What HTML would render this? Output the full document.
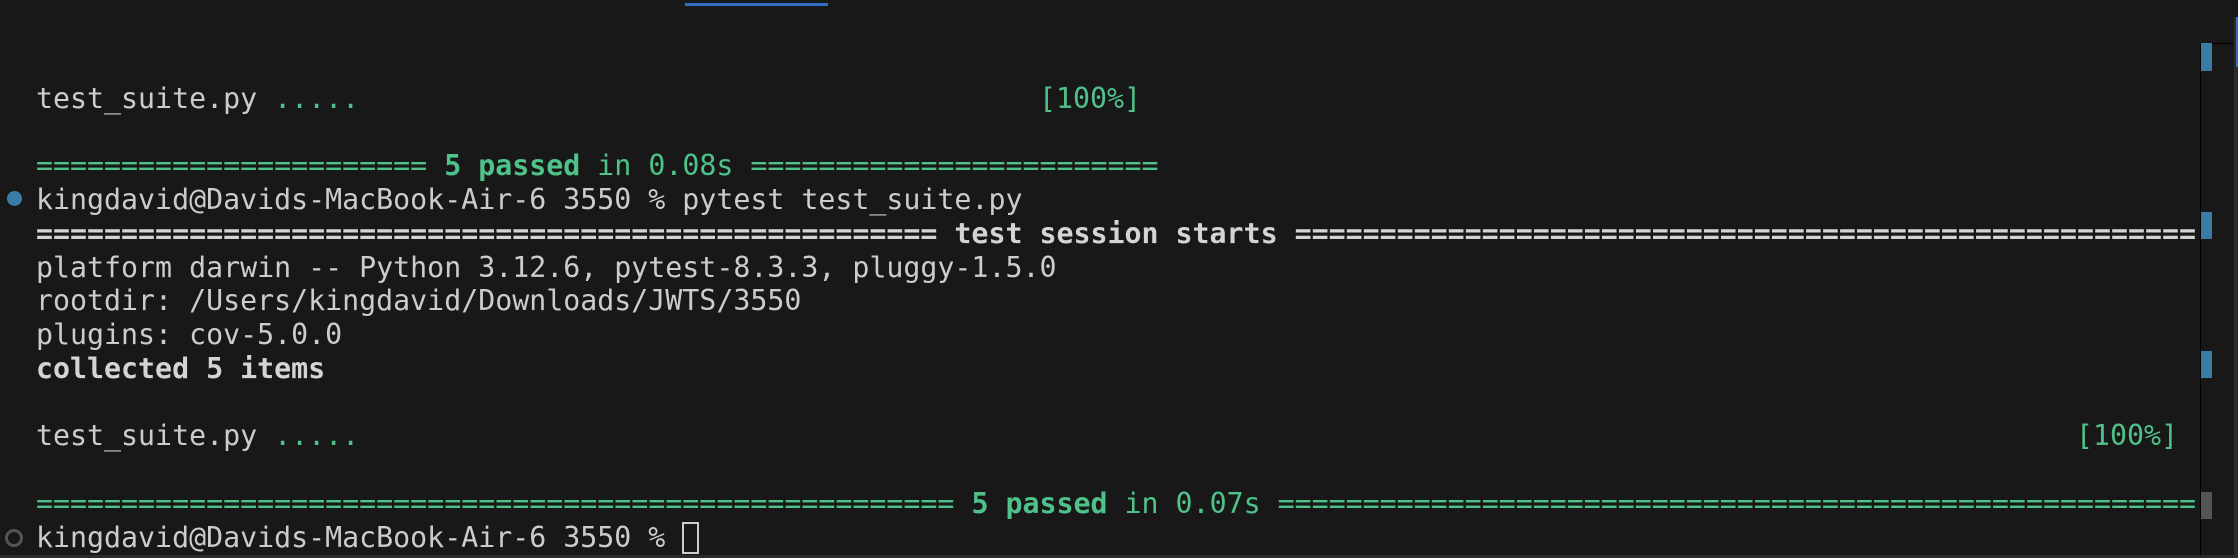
<!DOCTYPE html>
<html><head><meta charset="utf-8"><style>
html,body{margin:0;padding:0;background:#181818;width:2238px;height:558px;overflow:hidden;position:relative}
.r{position:absolute;left:36px;height:34px;line-height:34px;white-space:pre;font-family:"DejaVu Sans Mono","Liberation Mono",monospace;font-size:28.25px;color:#cccccc}
.g{color:#4fc28a}.b{font-weight:bold}.w{color:#d4d4d4}
</style></head><body>
<div style="position:absolute;left:685px;top:3px;width:143px;height:3px;background:#2f6ec4"></div>
<div class="r" style="top:82px">test_suite.py <span class="g">.....</span></div>
<div class="r g" style="top:82px;left:1039px">[100%]</div>
<div class="r g" style="top:149px">======================= <span class="b">5 passed</span> in 0.08s ========================</div>
<div style="position:absolute;left:7px;top:191px;width:15px;height:15px;border-radius:50%;background:#3a7ca8"></div>
<div class="r" style="top:183px">kingdavid@Davids-MacBook-Air-6 3550 % pytest test_suite.py</div>
<div class="r b w" style="top:217px">===================================================== test session starts =====================================================</div>
<div class="r" style="top:251px">platform darwin -- Python 3.12.6, pytest-8.3.3, pluggy-1.5.0</div>
<div class="r" style="top:284px">rootdir: /Users/kingdavid/Downloads/JWTS/3550</div>
<div class="r" style="top:318px">plugins: cov-5.0.0</div>
<div class="r b w" style="top:352px">collected 5 items</div>
<div class="r" style="top:419px">test_suite.py <span class="g">.....</span></div>
<div class="r g" style="top:419px;left:2076px">[100%]</div>
<div class="r g" style="top:487px">====================================================== <span class="b">5 passed</span> in 0.07s ======================================================</div>
<div style="position:absolute;left:5px;top:529px;width:12px;height:12px;border-radius:50%;border:3px solid #555"></div>
<div class="r" style="top:521px">kingdavid@Davids-MacBook-Air-6 3550 % </div>
<div style="position:absolute;left:682px;top:522px;width:13px;height:28px;border:2px solid #cccccc"></div>
<div style="position:absolute;left:2200px;top:43px;width:1px;height:515px;background:#000"></div>
<div style="position:absolute;left:2200px;top:43px;width:34px;height:1px;background:#000"></div>
<div style="position:absolute;left:2201px;top:43px;width:11px;height:28px;background:#3a7ca5"></div>
<div style="position:absolute;left:2201px;top:212px;width:11px;height:27px;background:#3a7ca5"></div>
<div style="position:absolute;left:2201px;top:351px;width:11px;height:27px;background:#3a7ca5"></div>
<div style="position:absolute;left:2201px;top:492px;width:11px;height:27px;background:#555"></div>
<div style="position:absolute;left:2234px;top:17px;width:4px;height:541px;background:#2b2b2b"></div>
<div style="position:absolute;left:2236px;top:17px;width:2px;height:50px;background:#2f6ec4"></div>
<div style="position:absolute;left:0;top:555px;width:2238px;height:3px;background:#2b2b2b"></div>
</body></html>
